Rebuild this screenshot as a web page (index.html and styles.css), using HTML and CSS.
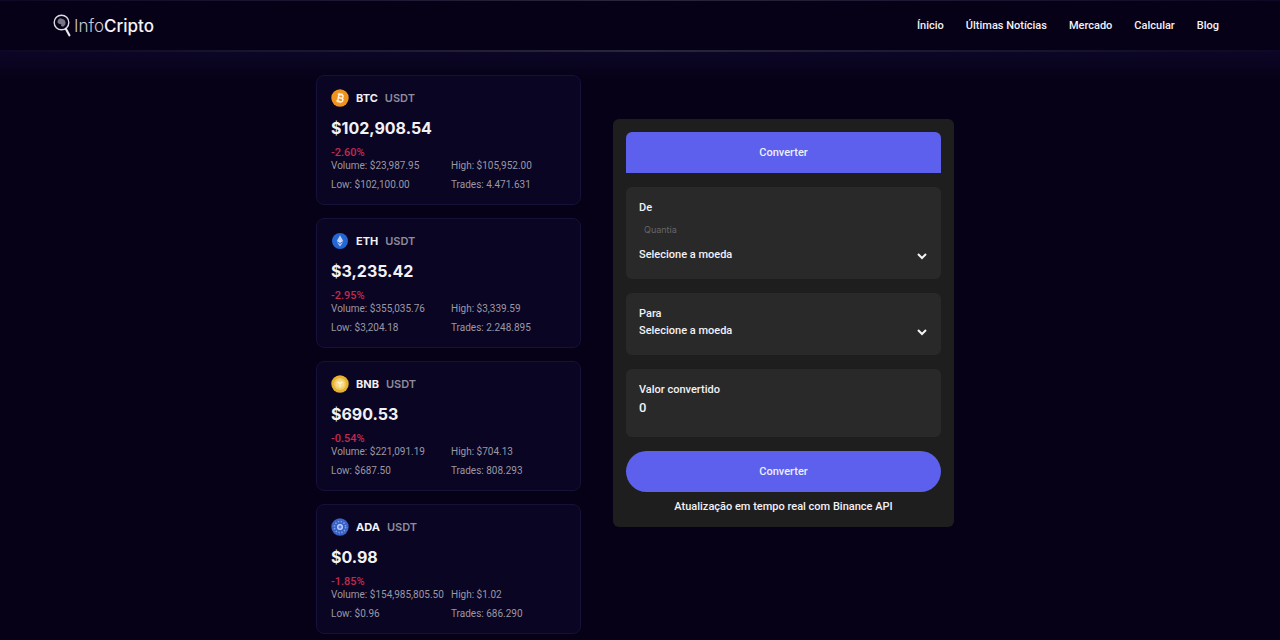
FILE: index.html
```html
<!DOCTYPE html>
<html lang="pt-BR">
<head>
<meta charset="utf-8">
<meta name="viewport" content="width=device-width, initial-scale=1">
<title>InfoCripto</title>
<link rel="stylesheet" href="styles.css">
</head>
<body>
<header class="header">
  <a class="logo" href="#">
    <svg class="logo-icon" viewBox="0 0 18 24" aria-hidden="true">
      <circle cx="8.5" cy="8.5" r="7.3" fill="none" stroke="#dddce6" stroke-width="1.4"/>
      <path d="M5 5.800l2-1.600 2 .5 2.400 1.100 1.200 2.400-.4 2.600-2 2-2.300-.7.500-1.600-2.600-.8-1.400-1.500z" fill="#777487"/>
      <path d="M12.800 14.800l3.600 6.500" stroke="#e9e8ee" stroke-width="2.200" stroke-linecap="round"/>
    </svg>
    <span class="logo-text">Info<strong>Cripto</strong></span>
  </a>
  <nav class="nav">
    <a href="#">Ínicio</a>
    <a href="#">Últimas Notícias</a>
    <a href="#">Mercado</a>
    <a href="#">Calcular</a>
    <a href="#">Blog</a>
  </nav>
</header>
<main class="main">
  <section class="coins" aria-label="Mercado">
    <article class="card">
      <h2 class="pair">
        <svg class="coin" viewBox="0 0 18 18" aria-hidden="true"><circle cx="9" cy="9" r="8.7" fill="#ee931f"/><g fill="none" stroke="#fff3df" stroke-width="1.4" transform="rotate(12 9 9)"><path d="M6 5.5h4a1.7 1.7 0 0 1 0 3.4H7.3h3.2a1.8 1.8 0 0 1 0 3.6H6M7.3 5.5v7"/><path d="M8 4v1.5M10 4v1.5M8 12.500v1.500M10 12.500v1.500" stroke-width="1"/></g></svg>
        <span>BTC</span><span class="quote">USDT</span>
      </h2>
      <p class="price">$102,908.54</p>
      <p class="change">-2.60%</p>
      <ul class="stats"><li>Volume: $23,987.95</li><li>High: $105,952.00</li><li>Low: $102,100.00</li><li>Trades: 4.471.631</li></ul>
    </article>
    <article class="card">
      <h2 class="pair">
        <svg class="coin" viewBox="0 0 18 18" aria-hidden="true"><circle cx="9" cy="9" r="8" fill="#2466d2"/><path d="M9 3.500l3.200 5.500L9 10.900 5.800 9z" fill="#d3ddff"/><path d="M5.800 10l3.200 1.900 3.200-1.900L9 14.500z" fill="#b8caff"/><path d="M9 3.500v4l3.200 1.500M5.800 9L9 7.500" stroke="#8eacf0" stroke-width=".5" fill="none"/></svg>
        <span>ETH</span><span class="quote">USDT</span>
      </h2>
      <p class="price">$3,235.42</p>
      <p class="change">-2.95%</p>
      <ul class="stats"><li>Volume: $355,035.76</li><li>High: $3,339.59</li><li>Low: $3,204.18</li><li>Trades: 2.248.895</li></ul>
    </article>
    <article class="card">
      <h2 class="pair">
        <svg class="coin" viewBox="0 0 18 18" aria-hidden="true"><circle cx="9" cy="9" r="8.7" fill="#e8b22f"/><circle cx="9" cy="9" r="6" fill="#f3cc64"/><path d="M9 4.500l4 2.300v4.500L9 13.500l-4-2.200V6.800z" fill="#f8dc8c"/><path d="M6.500 7L9 8.600 11.500 7M9 8.600v3" fill="none" stroke="#fff6d9" stroke-width="1.400"/></svg>
        <span>BNB</span><span class="quote">USDT</span>
      </h2>
      <p class="price">$690.53</p>
      <p class="change">-0.54%</p>
      <ul class="stats"><li>Volume: $221,091.19</li><li>High: $704.13</li><li>Low: $687.50</li><li>Trades: 808.293</li></ul>
    </article>
    <article class="card">
      <h2 class="pair">
        <svg class="coin" viewBox="0 0 18 18" aria-hidden="true"><circle cx="9" cy="9" r="8.700" fill="#365fc4"/><circle cx="9" cy="9" r="5.600" fill="none" stroke="#7f9ceb" stroke-width="1.600" stroke-dasharray="1.500 1.430"/><circle cx="9" cy="9" r="7.300" fill="none" stroke="#5f83dc" stroke-width=".8" stroke-dasharray="1 1.870"/><circle cx="9" cy="9" r="2.300" fill="#5279dc" stroke="#cbd8ff" stroke-width="1.300"/></svg>
        <span>ADA</span><span class="quote">USDT</span>
      </h2>
      <p class="price">$0.98</p>
      <p class="change">-1.85%</p>
      <ul class="stats"><li>Volume: $154,985,805.50</li><li>High: $1.02</li><li>Low: $0.96</li><li>Trades: 686.290</li></ul>
    </article>
  </section>
  <form class="converter">
    <button class="button button-tab" type="button">Converter</button>
    <div class="field">
      <label for="amount">De</label>
      <input id="amount" class="amount" type="text" inputmode="decimal" placeholder="Quantia">
      <div class="select-row">
        <select class="select" aria-label="Moeda de origem"><option>Selecione a moeda</option><option>BTC</option><option>ETH</option><option>BNB</option><option>ADA</option></select>
        <svg class="chevron" viewBox="0 0 12 12" aria-hidden="true"><path d="M2 5l4 4 4-4"/></svg>
      </div>
    </div>
    <div class="field">
      <label for="target">Para</label>
      <div class="select-row">
        <select id="target" class="select"><option>Selecione a moeda</option><option>BTC</option><option>ETH</option><option>BNB</option><option>ADA</option></select>
        <svg class="chevron" viewBox="0 0 12 12" aria-hidden="true"><path d="M2 5l4 4 4-4"/></svg>
      </div>
    </div>
    <div class="field field-result">
      <label for="result">Valor convertido</label>
      <output id="result" class="result">0</output>
    </div>
    <button class="button button-pill" type="button">Converter</button>
    <p class="note">Atualização em tempo real com Binance API</p>
  </form>
</main>
</body>
</html>
```

FILE: styles.css
```css
* {
  box-sizing: border-box;
}

body {
  margin: 0;
  min-height: 100vh;
  background: #060116;
  color: #f2f1f6;
  font: 500 11px/16px Roboto, sans-serif;
}

h2, p, ul {
  margin: 0;
  padding: 0;
}

a {
  color: inherit;
  text-decoration: none;
}

.header {
  display: flex;
  align-items: center;
  justify-content: space-between;
  height: 52px;
  padding: 0 61px 0 53px;
  border-top: 1px solid #10121f;
  border-bottom: 2px solid;
  border-image: linear-gradient(90deg, #0e0826, #2a263c 50%, #0e0826) 1;
}

.logo {
  display: flex;
  align-items: center;
  gap: 3px;
}

.logo-icon {
  width: 18px;
  height: 24px;
}

.logo-text {
  font: 300 17px/20px Inter, sans-serif;
  color: #c9c8d2;
}

.logo-text strong {
  font-weight: 500;
  color: #f4f3f7;
}

.nav {
  display: flex;
  gap: 22px;
}

.main {
  display: flex;
  justify-content: center;
  align-items: flex-start;
  gap: 32px;
  padding: 23px 10px 5px 0;
  background: linear-gradient(#0c0626, #060116 30px);
}

.coins {
  display: grid;
  gap: 13px;
  width: 265px;
}

.card {
  padding: 13px 14px 10px;
  border: 1px solid #161138;
  border-radius: 8px;
  background: #0a0522;
}

.pair {
  display: flex;
  align-items: center;
  gap: 7px;
  height: 18px;
  font: 700 11px/16px Inter, sans-serif;
}

.coin {
  width: 18px;
  height: 18px;
}

.quote {
  color: #8e8b9b;
  font-weight: 600;
}

.price {
  margin-top: 11px;
  font: 700 16px/20px Inter, sans-serif;
}

.change {
  margin-top: 8px;
  font: 500 11px/14px Roboto, sans-serif;
  color: #c22a50;
}

.stats {
  display: grid;
  grid-template-columns: 1fr 1fr;
  column-gap: 5px;
  row-gap: 7px;
  list-style: none;
  color: #9a98a5;
  font: 400 10px/12px Roboto, sans-serif;
  white-space: nowrap;
  padding-bottom: 3px;
}

.converter {
  display: grid;
  gap: 14px;
  width: 341px;
  margin-top: 44px;
  padding: 13px 13px 12px;
  border-radius: 6px;
  background: #1e1e1e;
}

.button {
  height: 41px;
  border: 0;
  background: #5c60ec;
  color: #eeeefc;
  font: inherit;
}

.button-tab {
  border-radius: 6px 6px 0 0;
}

.button-pill {
  border-radius: 24px;
}

.field {
  display: flex;
  flex-direction: column;
  padding: 13px 13px 15px;
  border-radius: 6px;
  background: #292929;
}

.amount {
  height: 18px;
  margin: 4px 0 8px;
  padding: 0 5px;
  border: 0;
  background: none;
  color: #f2f1f6;
  font: 400 9px/16px Inter, sans-serif;
}

.amount::placeholder {
  color: #66666a;
}

.select-row {
  display: flex;
  align-items: center;
  height: 18px;
}

.select {
  flex: 1;
  appearance: none;
  padding: 0;
  border: 0;
  background: none;
  color: inherit;
  font: inherit;
}

.chevron {
  width: 12px;
  height: 12px;
  fill: none;
  stroke: #f4f4f4;
  stroke-width: 2;
}

.field-result {
  padding-bottom: 19px;
}

.result {
  font-size: 13px;
  line-height: 20px;
}

.note {
  margin-top: -7px;
  text-align: center;
}
```
